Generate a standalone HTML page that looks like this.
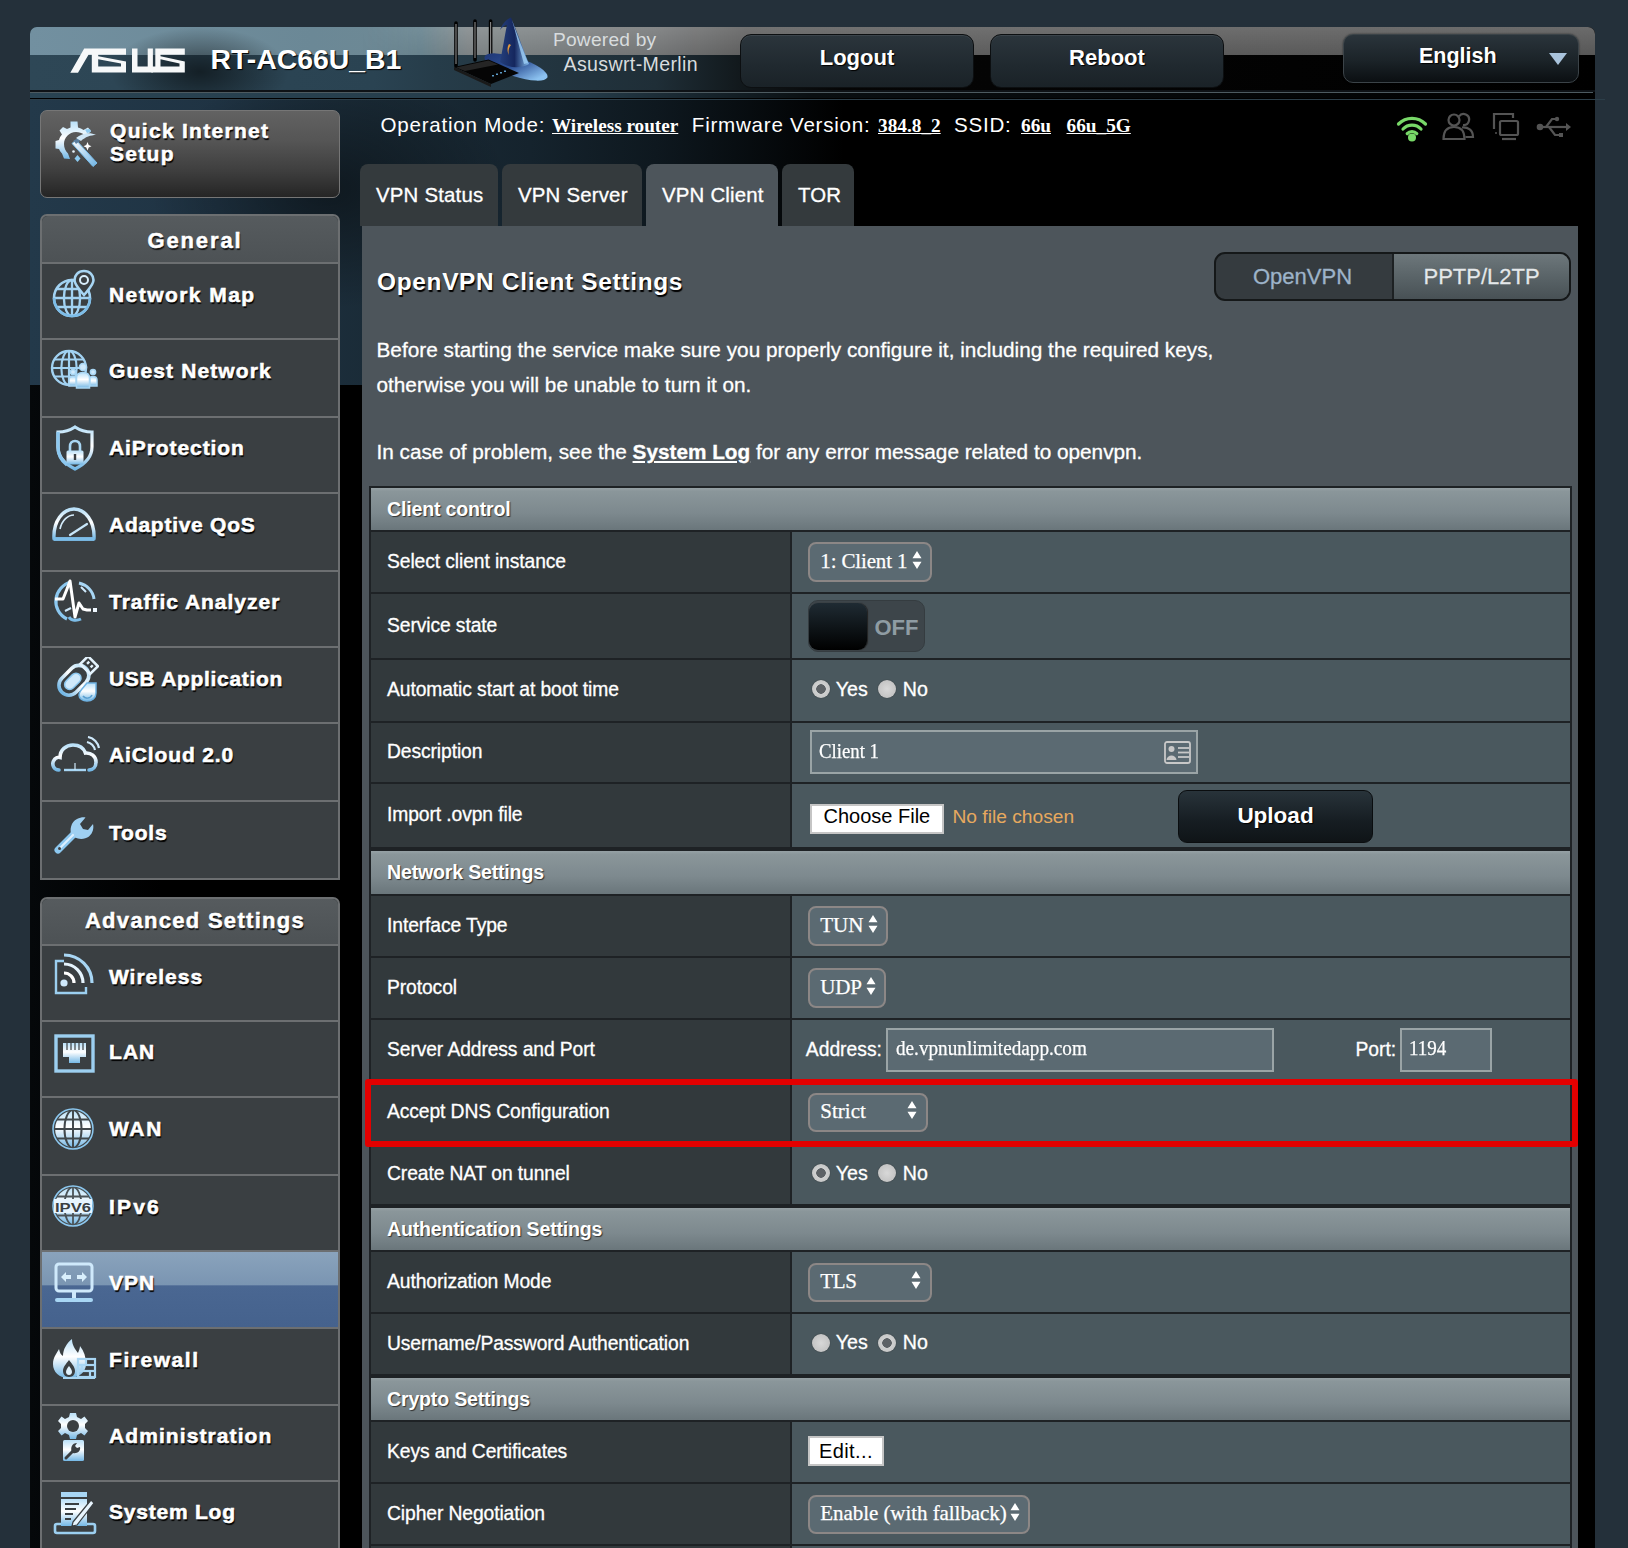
<!DOCTYPE html><html><head><meta charset="utf-8"><style>
html,body{margin:0;padding:0}
body{width:1628px;height:1548px;overflow:hidden;position:relative;background:#24303a;font-family:"Liberation Sans",sans-serif}
.t{position:absolute;white-space:nowrap;line-height:1}
.b{position:absolute;box-sizing:border-box}
.sh{text-shadow:1px 1px 1px #000}
.sb{text-shadow:1px 2px 1px #111}
svg{position:absolute}
</style></head><body><div class="b" style="left:30px;top:27px;width:1565px;height:1521px;background:#000;border-radius:7px 7px 0 0"></div>
<div class="b" style="left:30px;top:99px;width:1565px;height:286px;background:linear-gradient(90deg,#23394a 0%,#1f3343 12%,#1a2b37 22%,#15232d 32%,#0e181f 40%,#000 52%)"></div>
<div class="b" style="left:30px;top:99px;width:670px;height:286px;background:radial-gradient(ellipse 180px 120px at 300px 90px,rgba(0,0,0,.45),rgba(0,0,0,0))"></div>
<div class="b" style="left:30px;top:385px;width:332px;height:1163px;background:linear-gradient(90deg,#05080a 0%,#000 40%)"></div>
<div class="b" style="left:30px;top:27px;width:1565px;height:64px;border-radius:7px 7px 0 0;overflow:hidden;background:linear-gradient(90deg,#2e4756 0%,#2a4352 22%,#263c49 26%,#1f2e37 40%,#101619 46%,#050505 52%,#000 100%)"></div>
<div class="b" style="left:30px;top:27px;width:1565px;height:27.5px;border-radius:7px 7px 0 0;background:linear-gradient(90deg,#7290a0 0%,#6b8896 18%,#6e8994 25%,#878e90 28%,#7c7e7f 40%,#666 46%,#5f5f5f 100%)"></div>
<div class="b" style="left:360px;top:27px;width:1235px;height:27.5px;border-radius:0 8px 0 0;background:linear-gradient(180deg,rgba(255,255,255,.08) 0%,rgba(0,0,0,.08) 100%);-webkit-mask-image:linear-gradient(90deg,transparent 0,#000 100px)"></div>
<div class="b" style="left:110px;top:27px;width:180px;height:64px;background:radial-gradient(ellipse at 50% 70%,rgba(0,0,0,.55) 0%,rgba(0,0,0,0) 70%)"></div>
<div class="b" style="left:30px;top:91px;width:1565px;height:7px;background:linear-gradient(90deg,#294352 0%,#253c4a 35%,#0a0f12 50%,#000 100%)"></div>
<div class="b" style="left:30px;top:90px;width:1565px;height:2px;background:#0e1216"></div>
<div class="b" style="left:30px;top:92px;width:1563px;height:1px;background:#4d5a60"></div>
<div class="b" style="left:30px;top:98.5px;width:1575px;height:1.2999999999999972px;background:#2c3e49"></div>
<svg style="left:70px;top:48px" width="116" height="26" viewBox="0 0 116 26">
<g fill="#f6f8f9"><path d="M14.2 0.6 L56.0 0.6 L56.0 6.8 L28.2 6.8 L28.2 8.3 L56.0 13.5 L56.0 24.6 L21.8 24.6 L21.8 6.8 L18.5 6.8 L8.0 24.8 L0.3 24.8 Z M28.2 11.3 L51.0 15.5 L51.0 18.5 L28.2 18.5 Z" fill-rule="evenodd"/><path d="M62.0 0.6 L67.5 0.6 L67.5 18.5 L77.7 18.5 L77.7 0.6 L82.9 0.6 L82.9 24.6 L62.0 24.6 Z"/><path d="M85.3 0.6 L114.8 0.6 L114.8 6.8 L90.5 6.8 L90.5 8.3 L114.8 13.5 L114.8 24.6 L81.3 24.6 L81.3 18.5 L85.3 18.5 Z M90.5 11.3 L109.5 15.5 L109.5 18.5 L90.5 18.5 Z" fill-rule="evenodd"/>
</g></svg>
<div class="t" style="left:210.5px;top:45.46px;font-size:28.4px;font-weight:700;color:#fff;font-family:'Liberation Sans', sans-serif;letter-spacing:0px;text-shadow:1px 1px 1px #000">RT-AC66U_B1</div>
<svg style="left:448px;top:12px" width="110" height="80" viewBox="0 0 110 80">
<defs><linearGradient id="hb" x1="0" y1="0" x2="1" y2="0.3"><stop offset="0" stop-color="#1d3370"/><stop offset=".55" stop-color="#2c4f95"/><stop offset="1" stop-color="#8cc2f0"/></linearGradient>
<linearGradient id="hc" x1="0" y1="0" x2="1" y2="0"><stop offset="0" stop-color="#243e7a"/><stop offset=".5" stop-color="#15275e"/><stop offset="1" stop-color="#7fb6ea"/></linearGradient></defs>
<g stroke="#000" stroke-width="3.6" stroke-linecap="round"><line x1="8" y1="11" x2="8" y2="54"/><line x1="27" y1="9" x2="27" y2="48"/><line x1="42.6" y1="9" x2="42.6" y2="46"/></g>
<g stroke="#8a8a8a" stroke-width="1.1"><line x1="8" y1="12" x2="8" y2="52"/><line x1="27" y1="10" x2="27" y2="46"/><line x1="42.6" y1="10" x2="42.6" y2="44"/></g>
<ellipse cx="68" cy="55" rx="33" ry="9.5" transform="rotate(18 68 55)" fill="url(#hb)"/>
<path d="M63 5.5 C57 8 54 13 52 18 C54 15 57 13 59 13 C57 22 55 36 52 50 C60 56 72 57 81 52 C76 40 70 22 63 5.5 Z" fill="url(#hc)"/>
<path d="M64 8 C69 22 75 38 80 51 L76 52 C72 38 68 22 64 8 Z" fill="#9fd0f6" opacity=".8"/>
<path d="M61 32 C59 35 59 40 61 43 C60 40 60.5 36 63 33 Z" fill="#e49a3c"/>
<path d="M6 55 L40.5 47.5 L71 61 L43 72 Z" fill="#050505"/>
<path d="M8 55.5 L40.5 48.5 L50 52.5 L17 59 Z" fill="#3a3a3a" opacity=".6"/>
<path d="M6 55 L43 72 L43 75 L6 58 Z" fill="#1a1a1a"/>
<g fill="#5d9cc8"><rect x="44" y="63" width="2" height="1.5"/><rect x="48" y="61.5" width="2" height="1.5"/><rect x="52" y="60" width="2" height="1.5"/><rect x="56" y="58.5" width="2" height="1.5"/></g>
</svg>
<div class="t" style="left:553px;top:29.75px;font-size:19.2px;font-weight:400;color:#d8dcde;font-family:'Liberation Sans', sans-serif;letter-spacing:0.2px;">Powered by</div>
<div class="t" style="left:563.5px;top:54.91px;font-size:19.6px;font-weight:400;color:#d8dcde;font-family:'Liberation Sans', sans-serif;letter-spacing:0.35px;">Asuswrt-Merlin</div>
<div class="b" style="left:740px;top:34px;width:234px;height:54px;border-radius:11px;background:linear-gradient(180deg,#2b353c 0%,#20292f 60%,#1a2227 100%);border:1px solid #0c0f11;box-shadow:inset 0 1px 0 rgba(255,255,255,.08)"></div>
<div class="t sh" style="left:740px;width:234px;text-align:center;top:47.38px;font-size:22px;font-weight:700;color:#fff">Logout</div>
<div class="b" style="left:990px;top:34px;width:234px;height:54px;border-radius:11px;background:linear-gradient(180deg,#2b353c 0%,#20292f 60%,#1a2227 100%);border:1px solid #0c0f11;box-shadow:inset 0 1px 0 rgba(255,255,255,.08)"></div>
<div class="t sh" style="left:990px;width:234px;text-align:center;top:47.38px;font-size:22px;font-weight:700;color:#fff">Reboot</div>
<div class="b" style="left:1343px;top:34px;width:236px;height:49px;border-radius:10px;background:linear-gradient(180deg,#2a343b 0%,#1b2328 55%,#0b0f12 100%);border:1px solid #3b4348;box-shadow:0 0 2px rgba(0,0,0,.6)"></div>
<div class="t sh" style="left:1419px;top:45.80px;font-size:21.5px;font-weight:700;color:#fff">English</div>
<svg style="left:1548px;top:52px" width="20" height="14" viewBox="0 0 20 14"><path d="M1 1 L19 1 L10 13 Z" fill="#a9c3dc"/></svg>
<div class="t" style="left:380.5px;top:114.56px;font-size:20.6px;font-weight:400;color:#fff;font-family:'Liberation Sans', sans-serif;letter-spacing:0.75px;">Operation Mode:</div>
<div class="t" style="left:552px;top:115.92px;font-size:19.2px;font-weight:700;color:#fff;font-family:'Liberation Serif', serif;letter-spacing:0px;"><u>Wireless router</u></div>
<div class="t" style="left:691.8px;top:114.56px;font-size:20.6px;font-weight:400;color:#fff;font-family:'Liberation Sans', sans-serif;letter-spacing:0.75px;">Firmware Version:</div>
<div class="t" style="left:878px;top:115.84px;font-size:19.3px;font-weight:700;color:#fff;font-family:'Liberation Serif', serif;letter-spacing:0px;"><u>384.8_2</u></div>
<div class="t" style="left:954px;top:114.56px;font-size:20.6px;font-weight:400;color:#fff;font-family:'Liberation Sans', sans-serif;letter-spacing:0.75px;">SSID:</div>
<div class="t" style="left:1021px;top:115.84px;font-size:19.3px;font-weight:700;color:#fff;font-family:'Liberation Serif', serif;letter-spacing:0px;"><u>66u</u></div>
<div class="t" style="left:1066.5px;top:115.84px;font-size:19.3px;font-weight:700;color:#fff;font-family:'Liberation Serif', serif;letter-spacing:0px;"><u>66u_5G</u></div>
<svg style="left:1396px;top:114px" width="32" height="28" viewBox="0 0 32 28">
<g fill="none" stroke="#78d868" stroke-width="3.2" stroke-linecap="round">
<path d="M2.5 10 A19 19 0 0 1 29.5 10"/><path d="M7 15 A12.5 12.5 0 0 1 25 15"/><path d="M11.2 19.6 A6.5 6.5 0 0 1 20.8 19.6"/></g>
<circle cx="16" cy="23.5" r="4" fill="#78d868"/></svg>
<svg style="left:1442px;top:112px" width="33" height="29" viewBox="0 0 33 29">
<g fill="none" stroke="#545454" stroke-width="2.2">
<circle cx="12" cy="8" r="5.5"/><path d="M1.5 27 C1.5 18 6 15 12 15 C18 15 22.5 18 22.5 27 Z"/>
<path d="M17 4.5 A5.5 5.5 0 1 1 21 13"/><path d="M20 15.5 C26 15 31 18 31 25 L23.5 25"/></g></svg>
<svg style="left:1491px;top:111px" width="30" height="30" viewBox="0 0 30 30">
<g fill="none" stroke="#545454" stroke-width="2.2">
<path d="M3 18 L3 3 L22 3 L22 7"/><rect x="9" y="10" width="18" height="14" rx="1.5"/><line x1="11" y1="28" x2="25" y2="28"/></g>
<circle cx="5" cy="22" r="1" fill="#545454"/></svg>
<svg style="left:1536px;top:115px" width="36" height="25" viewBox="0 0 36 25">
<g fill="none" stroke="#545454" stroke-width="2.2">
<line x1="5" y1="12" x2="31" y2="12"/><path d="M10 12 L16 4 L20 4"/><path d="M13 12 L19 20 L24 20"/></g>
<circle cx="4" cy="12" r="3.3" fill="#545454"/><path d="M30 8 L35 12 L30 16 Z" fill="#545454"/>
<circle cx="21" cy="4" r="2.2" fill="#545454"/><rect x="23" y="18" width="4" height="4" fill="#545454"/></svg>
<div class="b" style="left:40px;top:110px;width:300px;height:88px;border-radius:7px;border:1.5px solid #767676;background:linear-gradient(180deg,#626262 0%,#555 35%,#3e3e3e 70%,#252525 100%)"></div>
<div class="t" style="left:110px;top:120.22px;font-size:21px;font-weight:700;color:#fff;font-family:'Liberation Sans', sans-serif;letter-spacing:1.3px;text-shadow:1px 2px 1px #000;-webkit-text-stroke:0.55px #fff">Quick Internet</div>
<div class="t" style="left:110px;top:143.22px;font-size:21px;font-weight:700;color:#fff;font-family:'Liberation Sans', sans-serif;letter-spacing:1.3px;text-shadow:1px 2px 1px #000;-webkit-text-stroke:0.55px #fff">Setup</div>
<div class="b" style="left:40px;top:214px;width:300px;height:666px;border-radius:7px 7px 0 0;border:2px solid #6c6f71;background:#3a3f42"></div>
<div class="b" style="left:42px;top:216px;width:296px;height:46px;border-radius:6px 6px 0 0;background:linear-gradient(180deg,#565b5e 0%,#4d5255 100%)"></div>
<div class="t sb" style="left:47px;width:296px;text-align:center;top:230.38px;font-size:22px;font-weight:700;color:#fff;letter-spacing:1.9px;-webkit-text-stroke:0.5px #fff">General</div>
<div class="b" style="left:40px;top:262px;width:300px;height:2px;background:#6c6f71"></div>
<div class="t" style="left:109px;top:283.62px;font-size:21px;font-weight:700;color:#fff;font-family:'Liberation Sans', sans-serif;letter-spacing:1.45px;text-shadow:1px 2px 1px #000;-webkit-text-stroke:0.55px #fff">Network Map</div>
<div class="b" style="left:40px;top:338px;width:300px;height:2px;background:#6c6f71"></div>
<div class="t" style="left:109px;top:359.62px;font-size:21px;font-weight:700;color:#fff;font-family:'Liberation Sans', sans-serif;letter-spacing:1.13px;text-shadow:1px 2px 1px #000;-webkit-text-stroke:0.55px #fff">Guest Network</div>
<div class="b" style="left:40px;top:415.5px;width:300px;height:2.0px;background:#6c6f71"></div>
<div class="t" style="left:109px;top:437.12px;font-size:21px;font-weight:700;color:#fff;font-family:'Liberation Sans', sans-serif;letter-spacing:0.91px;text-shadow:1px 2px 1px #000;-webkit-text-stroke:0.55px #fff">AiProtection</div>
<div class="b" style="left:40px;top:492px;width:300px;height:2px;background:#6c6f71"></div>
<div class="t" style="left:109px;top:513.62px;font-size:21px;font-weight:700;color:#fff;font-family:'Liberation Sans', sans-serif;letter-spacing:0.73px;text-shadow:1px 2px 1px #000;-webkit-text-stroke:0.55px #fff">Adaptive QoS</div>
<div class="b" style="left:40px;top:569.5px;width:300px;height:2.0px;background:#6c6f71"></div>
<div class="t" style="left:109px;top:591.12px;font-size:21px;font-weight:700;color:#fff;font-family:'Liberation Sans', sans-serif;letter-spacing:0.98px;text-shadow:1px 2px 1px #000;-webkit-text-stroke:0.55px #fff">Traffic Analyzer</div>
<div class="b" style="left:40px;top:646px;width:300px;height:2px;background:#6c6f71"></div>
<div class="t" style="left:109px;top:667.62px;font-size:21px;font-weight:700;color:#fff;font-family:'Liberation Sans', sans-serif;letter-spacing:0.69px;text-shadow:1px 2px 1px #000;-webkit-text-stroke:0.55px #fff">USB Application</div>
<div class="b" style="left:40px;top:722px;width:300px;height:2px;background:#6c6f71"></div>
<div class="t" style="left:109px;top:743.62px;font-size:21px;font-weight:700;color:#fff;font-family:'Liberation Sans', sans-serif;letter-spacing:0.87px;text-shadow:1px 2px 1px #000;-webkit-text-stroke:0.55px #fff">AiCloud 2.0</div>
<div class="b" style="left:40px;top:800px;width:300px;height:2px;background:#6c6f71"></div>
<div class="t" style="left:109px;top:821.62px;font-size:21px;font-weight:700;color:#fff;font-family:'Liberation Sans', sans-serif;letter-spacing:0.8px;text-shadow:1px 2px 1px #000;-webkit-text-stroke:0.55px #fff">Tools</div>
<div class="b" style="left:40px;top:897px;width:300px;height:703px;border-radius:7px 7px 0 0;border:2px solid #6c6f71;background:#3a3f42"></div>
<div class="b" style="left:42px;top:899px;width:296px;height:45px;border-radius:6px 6px 0 0;background:linear-gradient(180deg,#565b5e 0%,#4d5255 100%)"></div>
<div class="t sb" style="left:47px;width:296px;text-align:center;top:909.58px;font-size:22px;font-weight:700;color:#fff;letter-spacing:1.3px;-webkit-text-stroke:0.5px #fff">Advanced Settings</div>
<div class="b" style="left:40px;top:944px;width:300px;height:2px;background:#6c6f71"></div>
<div class="t" style="left:109px;top:965.62px;font-size:21px;font-weight:700;color:#fff;font-family:'Liberation Sans', sans-serif;letter-spacing:0.98px;text-shadow:1px 2px 1px #000;-webkit-text-stroke:0.55px #fff">Wireless</div>
<div class="b" style="left:40px;top:1019.5px;width:300px;height:2.0px;background:#6c6f71"></div>
<div class="t" style="left:109px;top:1041.12px;font-size:21px;font-weight:700;color:#fff;font-family:'Liberation Sans', sans-serif;letter-spacing:1.05px;text-shadow:1px 2px 1px #000;-webkit-text-stroke:0.55px #fff">LAN</div>
<div class="b" style="left:40px;top:1096px;width:300px;height:2px;background:#6c6f71"></div>
<div class="t" style="left:109px;top:1117.62px;font-size:21px;font-weight:700;color:#fff;font-family:'Liberation Sans', sans-serif;letter-spacing:1.7px;text-shadow:1px 2px 1px #000;-webkit-text-stroke:0.55px #fff">WAN</div>
<div class="b" style="left:40px;top:1174px;width:300px;height:2px;background:#6c6f71"></div>
<div class="t" style="left:109px;top:1195.62px;font-size:21px;font-weight:700;color:#fff;font-family:'Liberation Sans', sans-serif;letter-spacing:2.2px;text-shadow:1px 2px 1px #000;-webkit-text-stroke:0.55px #fff">IPv6</div>
<div class="b" style="left:40px;top:1250px;width:300px;height:2px;background:#6c6f71"></div>
<div class="b" style="left:42px;top:1252px;width:296px;height:75px;background:linear-gradient(180deg,#8aa3bc 0%,#7a95b2 44%,#4a6792 45%,#45628d 100%)"></div>
<div class="t" style="left:109px;top:1271.62px;font-size:21px;font-weight:700;color:#fff;font-family:'Liberation Sans', sans-serif;letter-spacing:1.05px;text-shadow:1px 2px 1px #000;-webkit-text-stroke:0.55px #fff">VPN</div>
<div class="b" style="left:40px;top:1327px;width:300px;height:2px;background:#6c6f71"></div>
<div class="t" style="left:109px;top:1348.62px;font-size:21px;font-weight:700;color:#fff;font-family:'Liberation Sans', sans-serif;letter-spacing:1.55px;text-shadow:1px 2px 1px #000;-webkit-text-stroke:0.55px #fff">Firewall</div>
<div class="b" style="left:40px;top:1403.5px;width:300px;height:2.0px;background:#6c6f71"></div>
<div class="t" style="left:109px;top:1425.12px;font-size:21px;font-weight:700;color:#fff;font-family:'Liberation Sans', sans-serif;letter-spacing:1.09px;text-shadow:1px 2px 1px #000;-webkit-text-stroke:0.55px #fff">Administration</div>
<div class="b" style="left:40px;top:1479.5px;width:300px;height:2.0px;background:#6c6f71"></div>
<div class="t" style="left:109px;top:1501.12px;font-size:21px;font-weight:700;color:#fff;font-family:'Liberation Sans', sans-serif;letter-spacing:0.77px;text-shadow:1px 2px 1px #000;-webkit-text-stroke:0.55px #fff">System Log</div>
<svg style="left:0;top:0" width="0" height="0"><defs>
<linearGradient id="gb" x1="0" y1="0" x2="0" y2="1"><stop offset="0" stop-color="#b9e0f8"/><stop offset=".45" stop-color="#ffffff"/><stop offset="1" stop-color="#74b8e6"/></linearGradient>
<linearGradient id="gb2" x1="0" y1="0" x2="1" y2="1"><stop offset="0" stop-color="#ffffff"/><stop offset="1" stop-color="#6fb3e3"/></linearGradient>
</defs></svg>
<svg style="left:50px;top:118px" width="50" height="50" viewBox="0 0 50 50">
<path d="M20.5 3.5 L27.5 3.5 L28 9.5 C30 10 32 11 33.5 12 L38 9.5 L41 13 L38.5 15.5 L34 16.5 C32 15 29 14 26 14 C19 14 14 20 14 26 C14 30 15.5 33 18 35.5 L20 41 L14 40.5 L12 35.5 C10.5 34 9.5 32.5 9 31 L5.5 30.5 L5.5 23 L9 22 C9.5 20 10.5 18 12 16.5 L9.5 12.5 L13 9 L17 11 C18 10.5 19.5 10 20.5 9.5 Z" fill="url(#gb)"/>
<path d="M14 26 C14 20 19 14 26 14 L26 18 C21 18 18 22 18 26 C18 30 20 33 23 34.5 L20 38 C16.5 35.5 14 31 14 26 Z" fill="#4b4b4b" opacity=".0"/>
<path d="M26 22 L47 45 L43 48.5 L22 25.5 Z" fill="url(#gb2)" stroke="#79bdea" stroke-width="1"/>
<path d="M23.5 22.5 L28 20.5 L30 23 L26 26 Z" fill="#5a7fa0"/>
<path d="M26 20 C32 15 40 14 46 17 C41 17 35 19 31 23 Z" fill="#cfe7f7"/>
<path d="M37.5 24 L38.7 27 L41.5 28.2 L38.7 29.4 L37.5 32.4 L36.3 29.4 L33.5 28.2 L36.3 27 Z" fill="#ffffff"/>
<circle cx="23.5" cy="33.5" r="1.3" fill="#e8f4fc"/>
<path d="M27.5 37 L30.5 40.5 L27.5 44 L24.5 40.5 Z" fill="#8ccaf0"/>
<path d="M35 11.5 L40 11 L41 14 L37 15 Z" fill="#8ccaf0"/>
</svg>
<svg style="left:52px;top:269px" width="44" height="50" viewBox="0 0 44 50"><circle cx="20" cy="29" r="18" fill="none" stroke="#a2d2f2" stroke-width="2.6"/>
<ellipse cx="20" cy="29" rx="8.1" ry="18" fill="none" stroke="#a2d2f2" stroke-width="2.3400000000000003"/>
<line x1="20" y1="11" x2="20" y2="47" stroke="#a2d2f2" stroke-width="2.3400000000000003"/>
<line x1="2" y1="29" x2="38" y2="29" stroke="#a2d2f2" stroke-width="2.3400000000000003"/>
<path d="M4.34 20.0 L35.66 20.0 M4.34 38.0 L35.66 38.0" stroke="#a2d2f2" stroke-width="2.3400000000000003"/>
<path d="M20 29 m-18 0 a18 18 0 0 0 36 0" fill="none" stroke="#7dbde8" stroke-width="2.6"/>
<path d="M32 2 C26 2 22.5 6.5 22.5 11 C22.5 16 28 21 32 26 C36 21 41.5 16 41.5 11 C41.5 6.5 38 2 32 2 Z" fill="#3a3f42" stroke="#a8d6f4" stroke-width="2.6"/>
<circle cx="32" cy="11" r="4" fill="none" stroke="#d8eefc" stroke-width="2"/>
</svg>
<svg style="left:50px;top:348px" width="48" height="44" viewBox="0 0 48 44"><circle cx="19" cy="20" r="17" fill="none" stroke="#a2d2f2" stroke-width="2.4"/>
<ellipse cx="19" cy="20" rx="7.65" ry="17" fill="none" stroke="#a2d2f2" stroke-width="2.16"/>
<line x1="19" y1="3" x2="19" y2="37" stroke="#a2d2f2" stroke-width="2.16"/>
<line x1="2" y1="20" x2="36" y2="20" stroke="#a2d2f2" stroke-width="2.16"/>
<path d="M4.210000000000001 11.5 L33.79 11.5 M4.210000000000001 28.5 L33.79 28.5" stroke="#a2d2f2" stroke-width="2.16"/>
<g fill="#3a3f42" stroke="#a8d6f4" stroke-width="1.5">
<circle cx="33" cy="19" r="3.6" fill="#cfe9fb"/>
<path d="M26.5 40 L26.5 30 C26.5 26 29 24.5 33 24.5 C37 24.5 39.5 26 39.5 30 L39.5 40 Z" fill="url(#gb)"/>
<circle cx="23" cy="24" r="2.6" fill="#cfe9fb"/><path d="M19 38 L19 32 C19 29.5 20.5 28.5 23 28.5 C25 28.5 26 29 26 30 L26 38 Z" fill="url(#gb)"/>
<circle cx="43" cy="24" r="2.6" fill="#cfe9fb"/><path d="M40 30 C40 29 41 28.5 43 28.5 C45.5 28.5 47 29.5 47 32 L47 38 L40 38 Z" fill="url(#gb)"/>
</g></svg>
<svg style="left:55px;top:425px" width="40" height="46" viewBox="0 0 40 46">
<path d="M20 2 C14 6 8 7 3 7 L3 22 C3 32 10 39 20 44 C30 39 37 32 37 22 L37 7 C32 7 26 6 20 2 Z" fill="none" stroke="url(#gb)" stroke-width="3.2"/>
<path d="M3 7 L3 22 C3 30 7 36 12 40" fill="none" stroke="#8cc8f0" stroke-width="3.4"/>
<path d="M15 26 L15 21.5 C15 18 17 16 20 16 C23 16 25 18 25 21.5 L25 26" fill="none" stroke="#a8d6f4" stroke-width="2.6"/>
<rect x="11.5" y="25.5" width="17" height="14" rx="1.5" fill="url(#gb)"/>
<rect x="18.8" y="29" width="2.4" height="6" fill="#3a3f42"/>
</svg>
<svg style="left:50px;top:505px" width="48" height="40" viewBox="0 0 48 40">
<path d="M4 34 C3 16 13 4 24 4 C35 4 45 16 44 34 Z" fill="none" stroke="url(#gb)" stroke-width="3.4" stroke-linejoin="round"/>
<path d="M4 34 L44 34" stroke="#7dbde8" stroke-width="3.4"/>
<path d="M10 24 C12 15 18 10 24 10" fill="none" stroke="#d4ecfb" stroke-width="1.6"/>
<path d="M20 30 L37 19" stroke="#c8e6fa" stroke-width="2.2" stroke-linecap="round"/>
</svg>
<svg style="left:53px;top:579px" width="46" height="46" viewBox="0 0 46 46">
<path d="M14 40 C6 36 2 28 3 20 C4 12 10 5 18 3" fill="none" stroke="#8cc8f0" stroke-width="3.2"/>
<path d="M26 4 C34 6 40 12 41 20" fill="none" stroke="#a8d6f4" stroke-width="3"/>
<path d="M2 20 L10 20 L14 10 L17 2 L22 38 L26 24 L30 30 L34 31 L38 31" fill="none" stroke="#ffffff" stroke-width="3" stroke-linejoin="round"/>
<path d="M16 38 C18 42 24 42 28 40" fill="none" stroke="#7dbde8" stroke-width="3"/>
<rect x="40" y="29" width="4" height="4" fill="#f0f8ff"/>
<path d="M12 32 L18 29 M28 8 L33 13" stroke="#cfe9fb" stroke-width="2"/>
</svg>
<svg style="left:53px;top:657px" width="46" height="46" viewBox="0 0 46 46">
<g transform="rotate(45 23 24) translate(0 -2)">
<rect x="11" y="10" width="20" height="34" rx="10" fill="none" stroke="url(#gb)" stroke-width="3.6"/>
<rect x="16" y="19" width="10" height="19" rx="5" fill="#cfe9fb" stroke="#8cc8f0" stroke-width="1.5"/>
<rect x="14" y="0" width="14" height="11" fill="none" stroke="#e4f3fd" stroke-width="2.6"/>
<rect x="17.5" y="3" width="2.4" height="3" fill="#e4f3fd"/><rect x="22.5" y="3" width="2.4" height="3" fill="#e4f3fd"/>
</g>
<path d="M34 26 C30 31 26 34 26 38 C26 42 30 44 34 44 C39 44 43 41 43 36 L43 26 Z" fill="url(#gb)" stroke="#6fb3e3" stroke-width="1.5"/>
<path d="M30 39 C32 42 37 42 39 38" fill="none" stroke="#5a9fd0" stroke-width="1.5"/>
</svg>
<svg style="left:50px;top:736px" width="50" height="40" viewBox="0 0 50 40">
<path d="M9 34 C3 34 2 28 3.5 25 C5 22 8 21 10 21.5 C10 14 16 9 23 9 C30 9 34 13 35.5 17 C41 16.5 46 20 46 26 C46 31 43 34 39 34" fill="none" stroke="url(#gb)" stroke-width="3.6" stroke-linecap="round"/>
<path d="M14 34 L36 34" stroke="#a8d6f4" stroke-width="2.4"/>
<line x1="25" y1="27" x2="25" y2="34" stroke="#cfe9fb" stroke-width="1.2"/>
<path d="M37 6 C41 7 44 10 45 14 M38 1 C44 2 48 7 49 12" fill="none" stroke="#cfe9fb" stroke-width="2.2"/>
</svg>
<svg style="left:52px;top:810px" width="44" height="44" viewBox="0 0 44 44">
<path d="M6 40 L22 24" stroke="#8cc8f0" stroke-width="7" stroke-linecap="round"/>
<path d="M20 26 C17 20 19 12 25 9 C28 7.5 31 7 33.5 7.5 L28 14 L31 19 L36 20 L41 14 C42 18 41 23 37 26.5 C33 29.5 27 29.5 23 27.5 Z" fill="#9fd0f2"/>
<path d="M7 39 L21 25" stroke="#dcefff" stroke-width="2.2" stroke-linecap="round"/>
<circle cx="7.5" cy="38.5" r="1.5" fill="#3a3f42"/>
</svg>
<svg style="left:52px;top:951px" width="44" height="46" viewBox="0 0 44 46">
<path d="M12 10 L4 10 L4 42 L34 42 L34 36" fill="none" stroke="#9ccff0" stroke-width="2.4"/>
<circle cx="12" cy="32" r="3.6" fill="#cfe9fb"/>
<path d="M12 22 A10 10 0 0 1 22 32" fill="none" stroke="#ffffff" stroke-width="3.2"/>
<path d="M12 13 A19 19 0 0 1 31 32" fill="none" stroke="#e6f4fd" stroke-width="3.2"/>
<path d="M12 4 A28 28 0 0 1 40 32" fill="none" stroke="#a8d6f4" stroke-width="3.2"/>
</svg>
<svg style="left:53px;top:1033px" width="44" height="42" viewBox="0 0 44 42">
<rect x="3" y="3" width="37" height="35" fill="none" stroke="#9ccff0" stroke-width="3.4"/>
<path d="M10 10 L33 10 L33 24 L27 24 L27 30 L16 30 L16 24 L10 24 Z" fill="url(#gb)"/>
<g stroke="#3a3f42" stroke-width="1.2"><line x1="14" y1="10" x2="14" y2="17"/><line x1="18" y1="10" x2="18" y2="17"/><line x1="22" y1="10" x2="22" y2="17"/><line x1="26" y1="10" x2="26" y2="17"/><line x1="30" y1="10" x2="30" y2="17"/></g>
</svg>
<svg style="left:52px;top:1106px" width="44" height="46" viewBox="0 0 44 46"><circle cx="21" cy="23" r="19" fill="url(#gb)"/><circle cx="21" cy="23" r="19" fill="none" stroke="#41484c" stroke-width="2.2"/>
<ellipse cx="21" cy="23" rx="8.55" ry="19" fill="none" stroke="#41484c" stroke-width="1.9800000000000002"/>
<line x1="21" y1="4" x2="21" y2="42" stroke="#41484c" stroke-width="1.9800000000000002"/>
<line x1="2" y1="23" x2="40" y2="23" stroke="#41484c" stroke-width="1.9800000000000002"/>
<path d="M4.469999999999999 13.5 L37.53 13.5 M4.469999999999999 32.5 L37.53 32.5" stroke="#41484c" stroke-width="1.9800000000000002"/><circle cx="21" cy="23" r="20" fill="none" stroke="#8cc8f0" stroke-width="1.5"/></svg>
<svg style="left:52px;top:1183px" width="44" height="46" viewBox="0 0 44 46"><circle cx="21" cy="23" r="19" fill="url(#gb)"/><circle cx="21" cy="23" r="19" fill="none" stroke="#4b5357" stroke-width="2.0"/>
<ellipse cx="21" cy="23" rx="8.55" ry="19" fill="none" stroke="#4b5357" stroke-width="1.8"/>
<line x1="21" y1="4" x2="21" y2="42" stroke="#4b5357" stroke-width="1.8"/>
<line x1="2" y1="23" x2="40" y2="23" stroke="#4b5357" stroke-width="1.8"/>
<path d="M4.469999999999999 13.5 L37.53 13.5 M4.469999999999999 32.5 L37.53 32.5" stroke="#4b5357" stroke-width="1.8"/><circle cx="21" cy="23" r="20" fill="none" stroke="#8cc8f0" stroke-width="1.5"/>
<rect x="2" y="16" width="38" height="14" fill="#e8f5fe"/>
<text x="21" y="28.5" text-anchor="middle" font-family="Liberation Sans, sans-serif" font-weight="700" font-size="13" fill="#3a3f42" textLength="36" lengthAdjust="spacingAndGlyphs">IPV6</text></svg>
<svg style="left:53px;top:1261px" width="44" height="46" viewBox="0 0 44 46">
<rect x="3" y="3" width="36" height="27" rx="3" fill="none" stroke="#cfe9fb" stroke-width="3"/>
<path d="M8 16 L13 11 L13 14 L18 14 L18 18 L13 18 L13 21 Z" fill="#d9effc"/>
<path d="M34 16 L29 11 L29 14 L24 14 L24 18 L29 18 L29 21 Z" fill="#d9effc"/>
<rect x="19" y="30" width="4" height="8" fill="#cfe9fb"/>
<rect x="2" y="37" width="38" height="4" rx="2" fill="#a8d6f4"/>
</svg>
<svg style="left:51px;top:1337px" width="46" height="44" viewBox="0 0 46 44">
<path d="M18 41 C8 41 2 35 2 27 C2 20 6 16 8 12 C9 16 10 18 12 19 C12 12 16 6 21 2 C21 8 24 12 27 16 C28 13 29 11 29 9 C33 14 35 20 35 27 C35 35 28 41 18 41 Z" fill="url(#gb)"/>
<path d="M18 40 C14 40 12 37 12 34 C12 30 15 27 18 23 C21 27 24 30 24 34 C24 37 22 40 18 40 Z" fill="#3a3f42"/>
<path d="M18 38 C16 38 15 36.5 15 35 C15 33 16.5 31 18 29 C19.5 31 21 33 21 35 C21 36.5 20 38 18 38 Z" fill="#dff1fc"/>
<g fill="none" stroke="#a8d6f4" stroke-width="2.2"><rect x="27" y="22" width="17" height="18"/><line x1="27" y1="28" x2="44" y2="28"/><line x1="27" y1="34" x2="44" y2="34"/><line x1="35" y1="22" x2="35" y2="28"/><line x1="31" y1="28" x2="31" y2="34"/><line x1="39" y1="34" x2="39" y2="40"/></g>
<line x1="12" y1="41" x2="44" y2="41" stroke="#a8d6f4" stroke-width="2"/>
</svg>
<svg style="left:56px;top:1412px" width="36" height="52" viewBox="0 0 36 52">
<g transform="translate(17 14)">
<path d="M-3 -13 L3 -13 L4 -9 L8 -7 L11.5 -9.5 L15 -5 L12 -2 L12 2 L15 5 L11.5 9.5 L8 7 L4 9 L3 13 L-3 13 L-4 9 L-8 7 L-11.5 9.5 L-15 5 L-12 2 L-12 -2 L-15 -5 L-11.5 -9.5 L-8 -7 L-4 -9 Z" fill="url(#gb)"/>
<circle cx="0" cy="0" r="6" fill="#3a3f42"/>
</g>
<rect x="7" y="28" width="21" height="21" rx="1.5" fill="url(#gb)"/>
<path d="M10 46 L18 38" stroke="#3a3f42" stroke-width="3" stroke-linecap="round"/>
<path d="M16 40 C14 36 16 31 21 31 L19 34 L21 36 L24 35 C25 39 21 42 17 41 Z" fill="#3a3f42"/>
</svg>
<svg style="left:53px;top:1490px" width="44" height="46" viewBox="0 0 44 46">
<rect x="2" y="34" width="40" height="9" rx="2" fill="none" stroke="#9ccff0" stroke-width="2.6"/>
<rect x="8" y="2" width="26" height="5" fill="#a8d6f4"/>
<rect x="8" y="9" width="26" height="27" fill="url(#gb)"/>
<g stroke="#3a3f42" stroke-width="2"><line x1="12" y1="14" x2="26" y2="14"/><line x1="12" y1="19" x2="23" y2="19"/><line x1="12" y1="24" x2="20" y2="24"/><line x1="12" y1="29" x2="18" y2="29"/></g>
<path d="M20 32 L38 10 L41 13 L24 35 L19 36 Z" fill="#e8f5fe" stroke="#3a3f42" stroke-width="1.2"/>
</svg>
<div class="b" style="left:360px;top:164px;width:138px;height:62px;border-radius:8px 8px 0 0;background:#343a3d"></div>
<div class="t" style="left:376px;top:184.73px;font-size:20.4px;font-weight:400;color:#fff;font-family:'Liberation Sans', sans-serif;letter-spacing:0.2px;-webkit-text-stroke:0.3px #fff">VPN Status</div>
<div class="b" style="left:502px;top:164px;width:140px;height:62px;border-radius:8px 8px 0 0;background:#343a3d"></div>
<div class="t" style="left:518px;top:184.73px;font-size:20.4px;font-weight:400;color:#fff;font-family:'Liberation Sans', sans-serif;letter-spacing:0.2px;-webkit-text-stroke:0.3px #fff">VPN Server</div>
<div class="b" style="left:646px;top:164px;width:132px;height:62px;border-radius:8px 8px 0 0;background:#4d555b"></div>
<div class="t" style="left:662px;top:184.73px;font-size:20.4px;font-weight:400;color:#fff;font-family:'Liberation Sans', sans-serif;letter-spacing:0.2px;-webkit-text-stroke:0.3px #fff">VPN Client</div>
<div class="b" style="left:782px;top:164px;width:72px;height:62px;border-radius:8px 8px 0 0;background:#343a3d"></div>
<div class="t" style="left:798px;top:184.73px;font-size:20.4px;font-weight:400;color:#fff;font-family:'Liberation Sans', sans-serif;letter-spacing:0.2px;-webkit-text-stroke:0.3px #fff">TOR</div>
<div class="b" style="left:362px;top:226px;width:1216px;height:1322px;background:#4d555b"></div>
<div class="t" style="left:377px;top:270.35px;font-size:24.4px;font-weight:700;color:#fff;font-family:'Liberation Sans', sans-serif;letter-spacing:0.7px;text-shadow:1px 2px 1px #000">OpenVPN Client Settings</div>
<div class="b" style="left:1214px;top:252px;width:357px;height:49px;border-radius:11px;border:2px solid #151819;background:#353b3f;overflow:hidden"></div>
<div class="b" style="left:1392px;top:254px;width:177px;height:45px;border-radius:0 9px 9px 0;border-left:2px solid #1d2123;background:linear-gradient(180deg,#6d777b 0%,#5a6468 50%,#485155 100%)"></div>
<div class="t" style="left:1253px;top:265.58px;font-size:22px;font-weight:400;color:#9db3c9;font-family:'Liberation Sans', sans-serif;letter-spacing:0px;-webkit-text-stroke:0.3px #9db3c9">OpenVPN</div>
<div class="t" style="left:1423.5px;top:265.58px;font-size:22px;font-weight:400;color:#e4e8ea;font-family:'Liberation Sans', sans-serif;letter-spacing:0px;text-shadow:0 0 1px rgba(0,0,0,.4);-webkit-text-stroke:0.3px #e4e8ea">PPTP/L2TP</div>
<div class="t" style="left:376.5px;top:340.44px;font-size:20.75px;font-weight:400;color:#fff;font-family:'Liberation Sans', sans-serif;letter-spacing:0.02px;-webkit-text-stroke:0.3px #fff">Before starting the service make sure you properly configure it, including the required keys,</div>
<div class="t" style="left:376.5px;top:374.84px;font-size:20.75px;font-weight:400;color:#fff;font-family:'Liberation Sans', sans-serif;letter-spacing:0px;-webkit-text-stroke:0.3px #fff">otherwise you will be unable to turn it on.</div>
<div class="t" style="left:376.5px;top:442.44px;font-size:20.75px;font-weight:400;color:#fff;font-family:'Liberation Sans', sans-serif;letter-spacing:0px;-webkit-text-stroke:0.3px #fff">In case of problem, see the <b><u>System Log</u></b> for any error message related to openvpn.</div>
<div class="b" style="left:369px;top:486px;width:1203px;height:46px;background:#1e2225"></div>
<div class="b" style="left:371px;top:488px;width:1199px;height:42px;background:linear-gradient(180deg,#96a1a5 0%,#8a969a 8%,#7d898e 60%,#6a767b 100%)"></div>
<div class="t" style="left:387px;top:499.91px;font-size:19.6px;font-weight:700;color:#fff;font-family:'Liberation Sans', sans-serif;letter-spacing:-0.2px;text-shadow:1px 1px 1px #333">Client control</div>
<div class="b" style="left:369px;top:532px;width:1203px;height:62px;background:#1e2225"></div>
<div class="b" style="left:371px;top:532px;width:419px;height:60px;background:#32393c"></div>
<div class="b" style="left:792px;top:532px;width:778px;height:60px;background:#4a585e"></div>
<div class="t" style="left:387px;top:551.96px;font-size:19.3px;font-weight:400;color:#fff;font-family:'Liberation Sans', sans-serif;letter-spacing:-0.1px;-webkit-text-stroke:0.3px #fff">Select client instance</div>
<div class="b" style="left:369px;top:594px;width:1203px;height:66px;background:#1e2225"></div>
<div class="b" style="left:371px;top:594px;width:419px;height:64px;background:#32393c"></div>
<div class="b" style="left:792px;top:594px;width:778px;height:64px;background:#4a585e"></div>
<div class="t" style="left:387px;top:615.96px;font-size:19.3px;font-weight:400;color:#fff;font-family:'Liberation Sans', sans-serif;letter-spacing:-0.1px;-webkit-text-stroke:0.3px #fff">Service state</div>
<div class="b" style="left:369px;top:660px;width:1203px;height:62.5px;background:#1e2225"></div>
<div class="b" style="left:371px;top:660px;width:419px;height:60.5px;background:#32393c"></div>
<div class="b" style="left:792px;top:660px;width:778px;height:60.5px;background:#4a585e"></div>
<div class="t" style="left:387px;top:680.21px;font-size:19.3px;font-weight:400;color:#fff;font-family:'Liberation Sans', sans-serif;letter-spacing:-0.1px;-webkit-text-stroke:0.3px #fff">Automatic start at boot time</div>
<div class="b" style="left:369px;top:722.5px;width:1203px;height:61.5px;background:#1e2225"></div>
<div class="b" style="left:371px;top:722.5px;width:419px;height:59.5px;background:#32393c"></div>
<div class="b" style="left:792px;top:722.5px;width:778px;height:59.5px;background:#4a585e"></div>
<div class="t" style="left:387px;top:742.21px;font-size:19.3px;font-weight:400;color:#fff;font-family:'Liberation Sans', sans-serif;letter-spacing:-0.1px;-webkit-text-stroke:0.3px #fff">Description</div>
<div class="b" style="left:369px;top:784px;width:1203px;height:65px;background:#1e2225"></div>
<div class="b" style="left:371px;top:784px;width:419px;height:63px;background:#32393c"></div>
<div class="b" style="left:792px;top:784px;width:778px;height:63px;background:#4a585e"></div>
<div class="t" style="left:387px;top:805.46px;font-size:19.3px;font-weight:400;color:#fff;font-family:'Liberation Sans', sans-serif;letter-spacing:-0.1px;-webkit-text-stroke:0.3px #fff">Import .ovpn file</div>
<div class="b" style="left:369px;top:849px;width:1203px;height:47px;background:#1e2225"></div>
<div class="b" style="left:371px;top:851px;width:1199px;height:43px;background:linear-gradient(180deg,#96a1a5 0%,#8a969a 8%,#7d898e 60%,#6a767b 100%)"></div>
<div class="t" style="left:387px;top:862.91px;font-size:19.6px;font-weight:700;color:#fff;font-family:'Liberation Sans', sans-serif;letter-spacing:-0.2px;text-shadow:1px 1px 1px #333">Network Settings</div>
<div class="b" style="left:369px;top:896px;width:1203px;height:62px;background:#1e2225"></div>
<div class="b" style="left:371px;top:896px;width:419px;height:60px;background:#32393c"></div>
<div class="b" style="left:792px;top:896px;width:778px;height:60px;background:#4a585e"></div>
<div class="t" style="left:387px;top:915.96px;font-size:19.3px;font-weight:400;color:#fff;font-family:'Liberation Sans', sans-serif;letter-spacing:-0.1px;-webkit-text-stroke:0.3px #fff">Interface Type</div>
<div class="b" style="left:369px;top:958px;width:1203px;height:62px;background:#1e2225"></div>
<div class="b" style="left:371px;top:958px;width:419px;height:60px;background:#32393c"></div>
<div class="b" style="left:792px;top:958px;width:778px;height:60px;background:#4a585e"></div>
<div class="t" style="left:387px;top:977.96px;font-size:19.3px;font-weight:400;color:#fff;font-family:'Liberation Sans', sans-serif;letter-spacing:-0.1px;-webkit-text-stroke:0.3px #fff">Protocol</div>
<div class="b" style="left:369px;top:1020px;width:1203px;height:62px;background:#1e2225"></div>
<div class="b" style="left:371px;top:1020px;width:419px;height:60px;background:#32393c"></div>
<div class="b" style="left:792px;top:1020px;width:778px;height:60px;background:#4a585e"></div>
<div class="t" style="left:387px;top:1039.96px;font-size:19.3px;font-weight:400;color:#fff;font-family:'Liberation Sans', sans-serif;letter-spacing:-0.1px;-webkit-text-stroke:0.3px #fff">Server Address and Port</div>
<div class="b" style="left:369px;top:1082px;width:1203px;height:62px;background:#1e2225"></div>
<div class="b" style="left:371px;top:1082px;width:419px;height:60px;background:#32393c"></div>
<div class="b" style="left:792px;top:1082px;width:778px;height:60px;background:#4a585e"></div>
<div class="t" style="left:387px;top:1101.96px;font-size:19.3px;font-weight:400;color:#fff;font-family:'Liberation Sans', sans-serif;letter-spacing:-0.1px;-webkit-text-stroke:0.3px #fff">Accept DNS Configuration</div>
<div class="b" style="left:369px;top:1144px;width:1203px;height:62px;background:#1e2225"></div>
<div class="b" style="left:371px;top:1144px;width:419px;height:60px;background:#32393c"></div>
<div class="b" style="left:792px;top:1144px;width:778px;height:60px;background:#4a585e"></div>
<div class="t" style="left:387px;top:1163.96px;font-size:19.3px;font-weight:400;color:#fff;font-family:'Liberation Sans', sans-serif;letter-spacing:-0.1px;-webkit-text-stroke:0.3px #fff">Create NAT on tunnel</div>
<div class="b" style="left:369px;top:1206px;width:1203px;height:46px;background:#1e2225"></div>
<div class="b" style="left:371px;top:1208px;width:1199px;height:42px;background:linear-gradient(180deg,#96a1a5 0%,#8a969a 8%,#7d898e 60%,#6a767b 100%)"></div>
<div class="t" style="left:387px;top:1219.91px;font-size:19.6px;font-weight:700;color:#fff;font-family:'Liberation Sans', sans-serif;letter-spacing:-0.2px;text-shadow:1px 1px 1px #333">Authentication Settings</div>
<div class="b" style="left:369px;top:1252px;width:1203px;height:62px;background:#1e2225"></div>
<div class="b" style="left:371px;top:1252px;width:419px;height:60px;background:#32393c"></div>
<div class="b" style="left:792px;top:1252px;width:778px;height:60px;background:#4a585e"></div>
<div class="t" style="left:387px;top:1271.96px;font-size:19.3px;font-weight:400;color:#fff;font-family:'Liberation Sans', sans-serif;letter-spacing:-0.1px;-webkit-text-stroke:0.3px #fff">Authorization Mode</div>
<div class="b" style="left:369px;top:1314px;width:1203px;height:62px;background:#1e2225"></div>
<div class="b" style="left:371px;top:1314px;width:419px;height:60px;background:#32393c"></div>
<div class="b" style="left:792px;top:1314px;width:778px;height:60px;background:#4a585e"></div>
<div class="t" style="left:387px;top:1333.96px;font-size:19.3px;font-weight:400;color:#fff;font-family:'Liberation Sans', sans-serif;letter-spacing:-0.1px;-webkit-text-stroke:0.3px #fff">Username/Password Authentication</div>
<div class="b" style="left:369px;top:1376px;width:1203px;height:46px;background:#1e2225"></div>
<div class="b" style="left:371px;top:1378px;width:1199px;height:42px;background:linear-gradient(180deg,#96a1a5 0%,#8a969a 8%,#7d898e 60%,#6a767b 100%)"></div>
<div class="t" style="left:387px;top:1389.91px;font-size:19.6px;font-weight:700;color:#fff;font-family:'Liberation Sans', sans-serif;letter-spacing:-0.2px;text-shadow:1px 1px 1px #333">Crypto Settings</div>
<div class="b" style="left:369px;top:1422px;width:1203px;height:62px;background:#1e2225"></div>
<div class="b" style="left:371px;top:1422px;width:419px;height:60px;background:#32393c"></div>
<div class="b" style="left:792px;top:1422px;width:778px;height:60px;background:#4a585e"></div>
<div class="t" style="left:387px;top:1441.96px;font-size:19.3px;font-weight:400;color:#fff;font-family:'Liberation Sans', sans-serif;letter-spacing:-0.1px;-webkit-text-stroke:0.3px #fff">Keys and Certificates</div>
<div class="b" style="left:369px;top:1484px;width:1203px;height:62px;background:#1e2225"></div>
<div class="b" style="left:371px;top:1484px;width:419px;height:60px;background:#32393c"></div>
<div class="b" style="left:792px;top:1484px;width:778px;height:60px;background:#4a585e"></div>
<div class="t" style="left:387px;top:1503.96px;font-size:19.3px;font-weight:400;color:#fff;font-family:'Liberation Sans', sans-serif;letter-spacing:-0.1px;-webkit-text-stroke:0.3px #fff">Cipher Negotiation</div>
<div class="b" style="left:369px;top:1546px;width:1203px;height:62px;background:#1e2225"></div>
<div class="b" style="left:371px;top:1546px;width:419px;height:60px;background:#32393c"></div>
<div class="b" style="left:792px;top:1546px;width:778px;height:60px;background:#4a585e"></div>
<div class="t" style="left:387px;top:1565.96px;font-size:19.3px;font-weight:400;color:#fff;font-family:'Liberation Sans', sans-serif;letter-spacing:-0.1px;-webkit-text-stroke:0.3px #fff">Advanced Settings</div>
<div class="b" style="left:808px;top:542px;width:124px;height:40px;border-radius:8px;border:2px solid #8c8786;background:#5b6a72"></div>
<div class="t" style="left:820.3px;top:550.51px;font-size:21px;font-weight:400;color:#fff;font-family:'Liberation Serif', serif;letter-spacing:-0.15px;-webkit-text-stroke:0.25px #fff">1: Client 1</div>
<svg style="left:912px;top:551.0px" width="10" height="18" viewBox="0 0 10 18"><path d="M5 0 L9.5 7.2 L0.5 7.2 Z M0.5 10.7 L9.5 10.7 L5 18 Z" fill="#fff"/></svg>
<div class="b" style="left:808px;top:600px;width:117px;height:52px;border-radius:10px;background:#3d454a;border:1px solid #353c40"></div>
<div class="b" style="left:809px;top:603px;width:58px;height:47px;border-radius:9px;background:linear-gradient(180deg,#1f2b33 0%,#0c1114 60%,#000 100%);box-shadow:1px 0 1px #222"></div>
<div class="t" style="left:874.5px;top:617.38px;font-size:22px;font-weight:700;color:#8f9ca3;font-family:'Liberation Sans', sans-serif;letter-spacing:0px;">OFF</div>
<div class="b" style="left:812px;top:680px;width:18px;height:18px;border-radius:50%;background:radial-gradient(circle,#5d6266 0 4.5px,#cfd0d0 5px,#bfc0c0 100%);box-shadow:0 0 1px #222"></div>
<div class="t" style="left:835.8px;top:679.71px;font-size:19.6px;font-weight:400;color:#fff;font-family:'Liberation Sans', sans-serif;letter-spacing:0px;-webkit-text-stroke:0.3px #fff">Yes</div>
<div class="b" style="left:878px;top:680px;width:18px;height:18px;border-radius:50%;background:radial-gradient(circle,#d8d8d8 0,#c4c4c4 70%,#a9a9a9 100%);box-shadow:0 0 1px #222"></div>
<div class="t" style="left:902.8px;top:679.71px;font-size:19.6px;font-weight:400;color:#fff;font-family:'Liberation Sans', sans-serif;letter-spacing:0px;-webkit-text-stroke:0.3px #fff">No</div>
<div class="b" style="left:810px;top:730px;width:388px;height:44px;border:2px solid #9aa4a6;background:#5b6a72"></div>
<div class="t" style="left:819px;top:740.71px;font-size:21px;font-weight:400;color:#fff;font-family:'Liberation Serif', serif;letter-spacing:0px;-webkit-text-stroke:0.25px #fff;transform:scaleX(0.894);transform-origin:0 0">Client 1</div>
<svg style="left:1164px;top:741px" width="27" height="23" viewBox="0 0 27 23">
<rect x="1" y="1" width="25" height="21" rx="2" fill="none" stroke="#c8c8c8" stroke-width="1.8"/>
<circle cx="7.5" cy="8" r="3" fill="#c8c8c8"/><path d="M2.5 19 C3 13 12 13 12.5 19 Z" fill="#c8c8c8"/>
<g stroke="#c8c8c8" stroke-width="1.8"><line x1="14" y1="7" x2="25" y2="7"/><line x1="14" y1="11.5" x2="25" y2="11.5"/><line x1="14" y1="16" x2="25" y2="16"/></g></svg>
<div class="b" style="left:810px;top:804px;width:134px;height:30px;background:#fff;border:2px solid #c5c5c5"></div>
<div class="t" style="left:823.5px;top:806.47px;font-size:20px;font-weight:400;color:#000;font-family:'Liberation Sans', sans-serif;letter-spacing:0px;">Choose File</div>
<div class="t" style="left:952.5px;top:807.15px;font-size:19.2px;font-weight:400;color:#e7a95e;font-family:'Liberation Sans', sans-serif;letter-spacing:0px;">No file chosen</div>
<div class="b" style="left:1178px;top:790px;width:195px;height:53px;border-radius:9px;background:linear-gradient(180deg,#28333a 0%,#161d22 60%,#0f1417 100%);border:1px solid #0a0d0f"></div>
<div class="t sh" style="left:1178px;width:195px;text-align:center;top:804.95px;font-size:22.5px;font-weight:700;color:#fff">Upload</div>
<div class="b" style="left:808px;top:906px;width:80px;height:40px;border-radius:8px;border:2px solid #8c8786;background:#5b6a72"></div>
<div class="t" style="left:820.3px;top:914.51px;font-size:21px;font-weight:400;color:#fff;font-family:'Liberation Serif', serif;letter-spacing:0px;-webkit-text-stroke:0.25px #fff">TUN</div>
<svg style="left:868px;top:915.0px" width="10" height="18" viewBox="0 0 10 18"><path d="M5 0 L9.5 7.2 L0.5 7.2 Z M0.5 10.7 L9.5 10.7 L5 18 Z" fill="#fff"/></svg>
<div class="b" style="left:808px;top:968px;width:78px;height:40px;border-radius:8px;border:2px solid #8c8786;background:#5b6a72"></div>
<div class="t" style="left:820.3px;top:976.51px;font-size:21px;font-weight:400;color:#fff;font-family:'Liberation Serif', serif;letter-spacing:-0.25px;-webkit-text-stroke:0.25px #fff">UDP</div>
<svg style="left:866px;top:977.0px" width="10" height="18" viewBox="0 0 10 18"><path d="M5 0 L9.5 7.2 L0.5 7.2 Z M0.5 10.7 L9.5 10.7 L5 18 Z" fill="#fff"/></svg>
<div class="t" style="left:805.8px;top:1039.66px;font-size:19.3px;font-weight:400;color:#fff;font-family:'Liberation Sans', sans-serif;letter-spacing:0px;-webkit-text-stroke:0.3px #fff">Address:</div>
<div class="b" style="left:886px;top:1028px;width:388px;height:44px;border:2px solid #9aa4a6;background:#5b6a72"></div>
<div class="t" style="left:895.5px;top:1037.91px;font-size:21px;font-weight:400;color:#fff;font-family:'Liberation Serif', serif;letter-spacing:0px;-webkit-text-stroke:0.25px #fff;transform:scaleX(0.914);transform-origin:0 0">de.vpnunlimitedapp.com</div>
<div class="t" style="left:1355.5px;top:1039.66px;font-size:19.3px;font-weight:400;color:#fff;font-family:'Liberation Sans', sans-serif;letter-spacing:0px;-webkit-text-stroke:0.3px #fff">Port:</div>
<div class="b" style="left:1400px;top:1028px;width:92px;height:44px;border:2px solid #9aa4a6;background:#5b6a72"></div>
<div class="t" style="left:1409px;top:1037.91px;font-size:21px;font-weight:400;color:#fff;font-family:'Liberation Serif', serif;letter-spacing:0px;-webkit-text-stroke:0.25px #fff;transform:scaleX(0.905);transform-origin:0 0">1194</div>
<div class="b" style="left:808px;top:1092.5px;width:120px;height:39.5px;border-radius:8px;border:2px solid #8c8786;background:#5b6a72"></div>
<div class="t" style="left:820.3px;top:1100.76px;font-size:21px;font-weight:400;color:#fff;font-family:'Liberation Serif', serif;letter-spacing:0px;-webkit-text-stroke:0.25px #fff">Strict</div>
<svg style="left:907px;top:1101.25px" width="10" height="18" viewBox="0 0 10 18"><path d="M5 0 L9.5 7.2 L0.5 7.2 Z M0.5 10.7 L9.5 10.7 L5 18 Z" fill="#fff"/></svg>
<div class="b" style="left:812px;top:1164px;width:18px;height:18px;border-radius:50%;background:radial-gradient(circle,#5d6266 0 4.5px,#cfd0d0 5px,#bfc0c0 100%);box-shadow:0 0 1px #222"></div>
<div class="t" style="left:835.8px;top:1163.71px;font-size:19.6px;font-weight:400;color:#fff;font-family:'Liberation Sans', sans-serif;letter-spacing:0px;-webkit-text-stroke:0.3px #fff">Yes</div>
<div class="b" style="left:878px;top:1164px;width:18px;height:18px;border-radius:50%;background:radial-gradient(circle,#d8d8d8 0,#c4c4c4 70%,#a9a9a9 100%);box-shadow:0 0 1px #222"></div>
<div class="t" style="left:902.8px;top:1163.71px;font-size:19.6px;font-weight:400;color:#fff;font-family:'Liberation Sans', sans-serif;letter-spacing:0px;-webkit-text-stroke:0.3px #fff">No</div>
<div class="b" style="left:808px;top:1262.5px;width:124px;height:39.0px;border-radius:8px;border:2px solid #8c8786;background:#5b6a72"></div>
<div class="t" style="left:820.3px;top:1270.51px;font-size:21px;font-weight:400;color:#fff;font-family:'Liberation Serif', serif;letter-spacing:-0.4px;-webkit-text-stroke:0.25px #fff">TLS</div>
<svg style="left:911px;top:1271.0px" width="10" height="18" viewBox="0 0 10 18"><path d="M5 0 L9.5 7.2 L0.5 7.2 Z M0.5 10.7 L9.5 10.7 L5 18 Z" fill="#fff"/></svg>
<div class="b" style="left:812px;top:1333.6px;width:18px;height:18px;border-radius:50%;background:radial-gradient(circle,#d8d8d8 0,#c4c4c4 70%,#a9a9a9 100%);box-shadow:0 0 1px #222"></div>
<div class="t" style="left:835.8px;top:1333.31px;font-size:19.6px;font-weight:400;color:#fff;font-family:'Liberation Sans', sans-serif;letter-spacing:0px;-webkit-text-stroke:0.3px #fff">Yes</div>
<div class="b" style="left:878px;top:1333.6px;width:18px;height:18px;border-radius:50%;background:radial-gradient(circle,#5d6266 0 4.5px,#cfd0d0 5px,#bfc0c0 100%);box-shadow:0 0 1px #222"></div>
<div class="t" style="left:902.8px;top:1333.31px;font-size:19.6px;font-weight:400;color:#fff;font-family:'Liberation Sans', sans-serif;letter-spacing:0px;-webkit-text-stroke:0.3px #fff">No</div>
<div class="b" style="left:808px;top:1436px;width:76px;height:30px;background:#fff;border:2px solid #c5c5c5"></div>
<div class="t" style="left:819px;top:1441.07px;font-size:20px;font-weight:400;color:#000;font-family:'Liberation Sans', sans-serif;letter-spacing:0.4px;">Edit...</div>
<div class="b" style="left:808px;top:1494.5px;width:222px;height:39.5px;border-radius:8px;border:2px solid #8c8786;background:#5b6a72"></div>
<div class="t" style="left:820.3px;top:1502.76px;font-size:21px;font-weight:400;color:#fff;font-family:'Liberation Serif', serif;letter-spacing:-0.06px;-webkit-text-stroke:0.25px #fff">Enable (with fallback)</div>
<svg style="left:1010px;top:1503.25px" width="10" height="18" viewBox="0 0 10 18"><path d="M5 0 L9.5 7.2 L0.5 7.2 Z M0.5 10.7 L9.5 10.7 L5 18 Z" fill="#fff"/></svg>
<div class="b" style="left:365px;top:1079px;width:1213px;height:68px;border:6px solid #e30000;border-radius:3px"></div></body></html>
